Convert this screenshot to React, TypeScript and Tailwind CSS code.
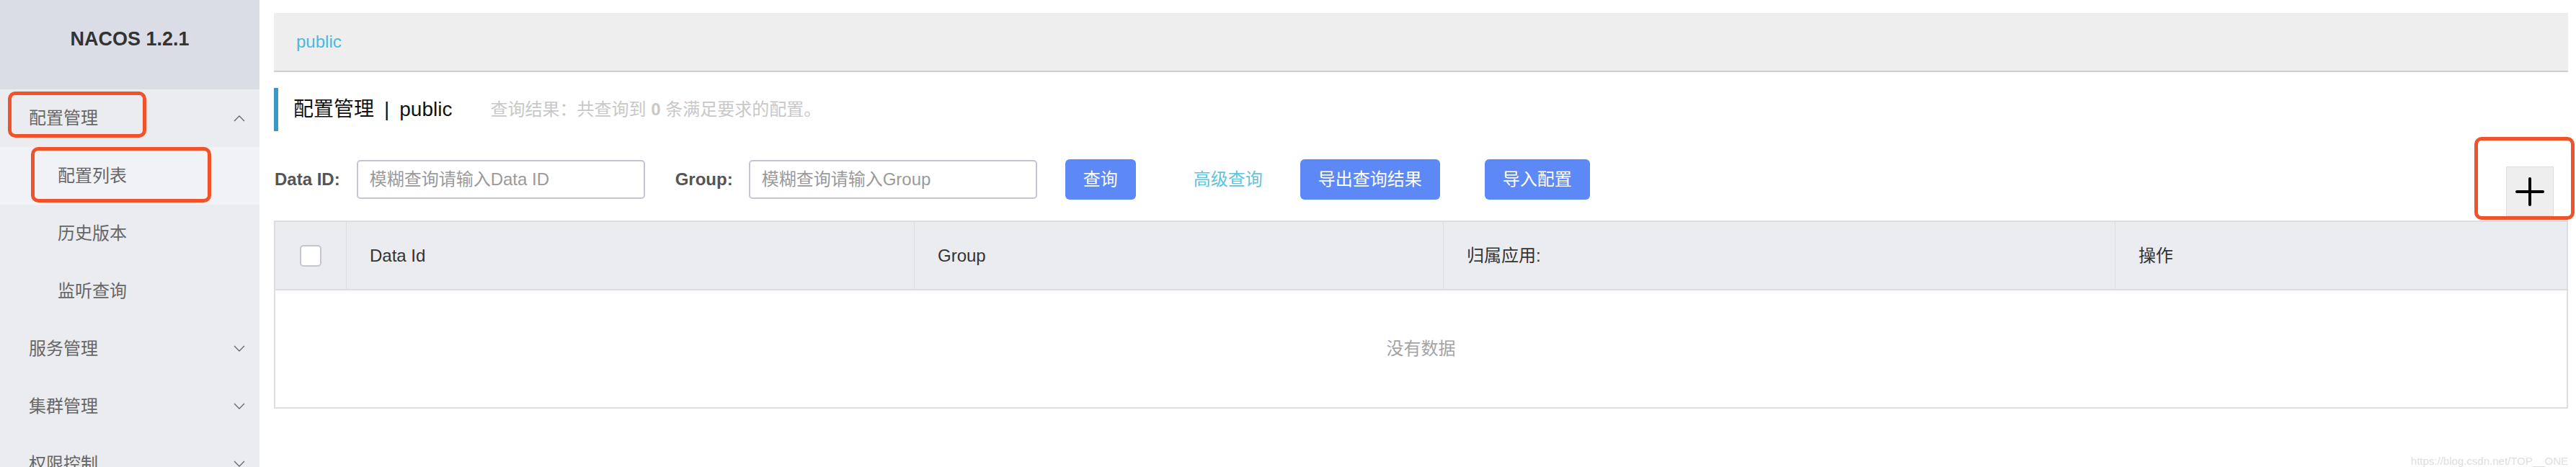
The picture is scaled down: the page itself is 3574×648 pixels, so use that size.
import { ReactNode } from 'react'

const Chevron = ({ up = false }: { up?: boolean }) => (
  <svg width="16" height="10" viewBox="0 0 16 10" className="shrink-0">
    <polyline
      points={up ? '1,9 8,2 15,9' : '1,1 8,8 15,1'}
      fill="none"
      stroke="#666"
      strokeWidth="1.3"
    />
  </svg>
)

const MenuItem = ({
  label,
  sub = false,
  active = false,
  open,
}: {
  label: string
  sub?: boolean
  active?: boolean
  open?: boolean
}) => (
  <div
    className={`flex h-[80px] items-center justify-between pr-[20px] text-[24px] text-[#666] ${
      sub ? 'pl-[80px]' : 'pl-[40px]'
    } ${active ? 'bg-[#f1f2f6]' : ''}`}
  >
    <span>{label}</span>
    {open !== undefined && <Chevron up={open} />}
  </div>
)

const Button = ({ children, className = '' }: { children: ReactNode; className?: string }) => (
  <button className={`h-[56px] rounded-[6px] bg-[#5d89f7] px-[25px] text-[24px] text-white ${className}`}>
    {children}
  </button>
)

const Annotation = ({ className }: { className: string }) => (
  <div className={`pointer-events-none absolute rounded-[10px] border-[5px] border-[#f0532a] ${className}`} />
)

export default function App() {
  return (
    <div className="relative flex h-[648px] w-full overflow-hidden bg-white font-['Liberation_Sans','Noto_Sans_CJK_SC',sans-serif]">
      {/* sidebar */}
      <aside className="w-[360px] shrink-0 bg-[#ebecf0]">
        <div className="flex h-[124px] items-center justify-center bg-[#dadde6] pb-[16px] text-[27px] font-bold text-[#333]">
          NACOS 1.2.1
        </div>
        <MenuItem label="配置管理" open />
        <MenuItem label="配置列表" sub active />
        <MenuItem label="历史版本" sub />
        <MenuItem label="监听查询" sub />
        <MenuItem label="服务管理" open={false} />
        <MenuItem label="集群管理" open={false} />
        <MenuItem label="权限控制" open={false} />
      </aside>

      {/* main */}
      <main className="flex-1 pl-[20px] pr-[11px]">
        <div className="mt-[18px] flex h-[82px] items-center border-b-2 border-[#cfcfcf] bg-[#eeeeee] pl-[31px] text-[24px] text-[#4bb8dc]">
          public
        </div>

        <div className="mt-[22px] flex h-[60px] items-center border-l-[6px] border-[#3c97c8] pl-[21px]">
          <span className="text-[28px] text-[#111]">配置管理</span>
          <span className="mx-[14px] text-[28px] text-[#111]">|</span>
          <span className="text-[28px] text-[#111]">public</span>
          <span className="ml-[53px] text-[24px] text-[#c8c8c8]">
            查询结果：共查询到 <b>0</b> 条满足要求的配置。
          </span>
        </div>

        <div className="mt-[39px] flex items-start">
          <div className="flex h-[56px] items-center">
            <span className="ml-[1px] text-[24px] font-bold text-[#555]">Data ID:</span>
            <input
              className="ml-[23px] h-[54px] w-[400px] rounded-[5px] border-2 border-[#c4c6cf] px-[16px] text-[24px] outline-none placeholder:text-[#9a9a9a]"
              placeholder="模糊查询请输入Data ID"
            />
            <span className="ml-[42px] text-[24px] font-bold text-[#555]">Group:</span>
            <input
              className="ml-[22px] h-[54px] w-[400px] rounded-[5px] border-2 border-[#c4c6cf] px-[16px] text-[24px] outline-none placeholder:text-[#9a9a9a]"
              placeholder="模糊查询请输入Group"
            />
            <Button className="ml-[39px]">查询</Button>
            <span className="ml-[80px] text-[24px] text-[#62c3dd]">高级查询</span>
            <Button className="ml-[52px]">导出查询结果</Button>
            <Button className="ml-[62px]">导入配置</Button>
          </div>
          <button className="ml-auto mr-[20px] mt-[10px] flex h-[69px] w-[66px] items-center justify-center border border-[#dddddd] bg-[#eeeeee]">
            <svg width="40" height="40" viewBox="0 0 40 40">
              <path d="M20 2v36M2 20h36" stroke="#000" strokeWidth="4" strokeLinecap="round" />
            </svg>
          </button>
        </div>

        {/* table */}
        <div className="mt-[6px] border-2 border-[#dcdee3]">
          <div className="flex h-[95px] border-b-2 border-[#dcdee3] bg-[#ebecf0] text-[24px] text-[#333]">
            <div className="flex w-[98px] items-center justify-center">
              <div className="h-[30px] w-[30px] rounded-[5px] border-2 border-[#c4c6cf] bg-white" />
            </div>
            <div className="flex w-[788px] items-center border-l border-[#dcdee3] pl-[32px]">Data Id</div>
            <div className="flex w-[734px] items-center border-l border-[#dcdee3] pl-[32px]">Group</div>
            <div className="flex w-[932px] items-center border-l border-[#dcdee3] pl-[32px]">归属应用:</div>
            <div className="flex flex-1 items-center border-l border-[#dcdee3] pl-[32px]">操作</div>
          </div>
          <div className="flex h-[162px] items-center justify-center text-[24px] text-[#a3a3a3]">没有数据</div>
        </div>

        <div className="mt-[62px] text-right text-[15px] text-[#dedede]">https://blog.csdn.net/TOP__ONE</div>
      </main>

      {/* red annotation boxes */}
      <Annotation className="left-[11px] top-[127px] h-[64px] w-[192px]" />
      <Annotation className="left-[43px] top-[204px] h-[77px] w-[250px]" />
      <Annotation className="left-[3433px] top-[190px] h-[115px] w-[139px]" />
    </div>
  )
}
